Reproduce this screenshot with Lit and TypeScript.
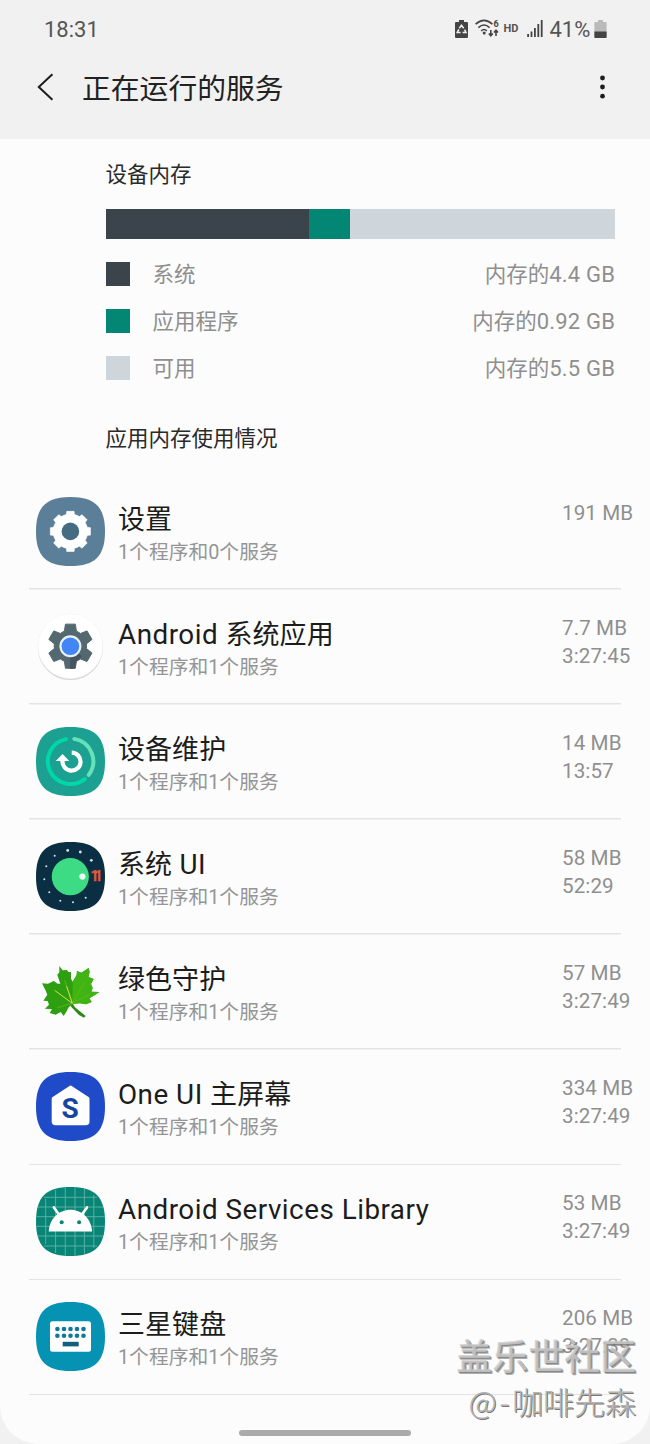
import { LitElement, html, css, svg } from "lit";
import { customElement, property } from "lit/decorators.js";

const SQUIRCLE = "M34.5 0C59 0 69 10 69 34.5S59 69 34.5 69 0 59 0 34.5 10 0 34.5 0Z";

// closed outline of a cog, first tooth pointing up
function gearPath(cx: number, cy: number, teeth: number, outer: number, inner: number, top: number, base: number) {
    const step = (Math.PI * 2) / teeth;
    const point = (r: number, a: number) => `${(cx + r * Math.sin(a)).toFixed(2)} ${(cy - r * Math.cos(a)).toFixed(2)}`;
    let d = "";
    for (let i = 0; i < teeth; i++) {
        const a = i * step;
        d += `${i ? "L" : "M"}${point(inner, a - base)}L${point(outer, a - top)}L${point(outer, a + top)}L${point(inner, a + base)}`;
        d += `A${inner} ${inner} 0 0 1 ${point(inner, a + step - base)}`;
    }
    return d + "Z";
}

const stars = [
    [31.7, 8.4], [44.3, 10], [55.3, 18.3], [18.7, 13.7], [10.3, 24.3],
    [8.3, 37.3], [13.3, 50.3], [24.3, 58.7], [37, 60.3], [49.7, 55.7],
];

const icons: Record<string, unknown> = {
    settings: svg`
        <path d="${SQUIRCLE}" fill="#5b7f99"/>
        <path d="${gearPath(34.4, 34.4, 8, 20.4, 17.3, 0.18, 0.24)}" fill="#fff" stroke="#fff" stroke-width="0.6" stroke-linejoin="round"/>
        <circle cx="34.4" cy="34.4" r="8.8" fill="#456b83"/>`,
    android: svg`
        <circle cx="34.4" cy="35.6" r="32.5" fill="#d2d2d2"/>
        <circle cx="34.4" cy="34.5" r="32.7" fill="#e9e9e9"/>
        <circle cx="34.4" cy="34.2" r="32.3" fill="#fff"/>
        <path d="${gearPath(34.4, 34.2, 6, 22.6, 16.2, 0.22, 0.38)}" fill="#54686f" stroke="#54686f" stroke-linejoin="round"/>
        <path d="M34.4 34.2 46 44.5 40.5 49 38.8 56.5 34 57Z" fill="#45545f"/>
        <circle cx="34.4" cy="34.2" r="11" fill="#e8f0fb"/>
        <circle cx="34.4" cy="34.2" r="8.8" fill="#4285f4"/>`,
    care: svg`
        <path d="${SQUIRCLE}" fill="#1ba092"/>
        <g fill="none" stroke-width="4" stroke-linecap="round">
            <path d="M30 12.1A22.7 22.7 0 1 0 48.7 52.1" stroke="#00d7a7"/>
            <path d="M38.3 11.9A22.7 22.7 0 0 1 52.7 47.9" stroke="#66e2b8"/>
        </g>
        <path d="M35.7 25.6A9 9 0 1 1 26.6 33.5" fill="none" stroke="#fff" stroke-width="4.2"/>
        <path d="M19.7 34 26.6 27 33.3 34Z" fill="#fff"/>`,
    ui: svg`
        <path d="${SQUIRCLE}" fill="#0a2e42"/>
        ${stars.map(([x, y], i) => svg`<circle cx="${x}" cy="${y}" r="${i < 3 ? 1.4 : 1}" fill="#d5e6ea"/>`)}
        <circle cx="34.3" cy="34.7" r="18.6" fill="#3ddc84"/>
        <circle cx="46.4" cy="34.6" r="3.1" fill="#e9fff2"/>
        <text x="54.6" y="39.4" font-family="Roboto" font-size="14" font-weight="700" textLength="12" fill="#dd5b3c" stroke="#dd5b3c" stroke-width="0.4">11</text>`,
    leaf: svg`
        <g transform="translate(-16 -17.3) scale(0.3333)">
            <path d="M157 190 165 203 197 229 192 234 177 226 152 200Z" fill="#2c8a14"/>
            <path d="M118 79 128 92 141 91 145 97 153 97 153 117 158 126 170 106 171 94 184 99 206 85 209 98 205 112 221 118 213 133 218 145 214 156 238 157 226 165 208 176 215 187 198 194 180 191 158 193 146 203 139 216 131 229 122 217 107 225 89 220 96 209 75 207 87 195 83 184 70 183 82 165 76 151 66 131 84 132 101 124 113 132 121 132 116 118 112 105 118 98Z" fill="#2e9f10"/>
            <path d="M157 190 158 126 170 106 171 94 184 99 206 85 209 98 205 112 221 118 213 133 218 145 214 156 238 157 226 165 208 176 215 187 198 194 180 191Z" fill="#3fb412"/>
            <path d="M157 190 134 122M157 190 194 128M157 190 112 204M157 190 210 164" fill="none" stroke="#62bb1c" stroke-width="2.5"/>
            <path d="M157 191 104 152M157 191 140 140" fill="none" stroke="#d7dd45" stroke-width="3"/>
        </g>`,
    home: svg`
        <path d="${SQUIRCLE}" fill="#1f4bc8"/>
        <path d="M34.6 14.8 52.2 26.4V49.5Q52.2 52 49.7 52H19.5Q17 52 17 49.5V26.4Z" fill="#fff" stroke="#fff" stroke-width="2.6" stroke-linejoin="round"/>
        <text x="34.2" y="46" text-anchor="middle" font-family="Roboto" font-size="28" font-weight="700" fill="#16459f">S</text>`,
    library: svg`
        <path d="${SQUIRCLE}" fill="#088576"/>
        <path d="M9.7 12V57M19.6 3V66M29.3 0V69M39 0V69M48.4 2V67M57.8 8V61M8 10.3H61M2 20H67M0 29.7H69M0 39.3H69M2 49H67M8 59H61" stroke="#62b3a7" stroke-width="0.9"/>
        <path d="M17.9 20.4 23.5 28.2M51 20.4 45.4 28.2" stroke="#fff" stroke-width="2.6" stroke-linecap="round"/>
        <path d="M12.7 44.4C13.6 32 22.5 22.8 34.4 22.8S55.2 32 56.1 44.4Z" fill="#fff"/>
        <circle cx="25.7" cy="35.3" r="2" fill="#088576"/>
        <circle cx="43.1" cy="35.3" r="2" fill="#088576"/>`,
    keyboard: svg`
        <path d="${SQUIRCLE}" fill="#0592b3"/>
        <rect x="14" y="19.2" width="41" height="30.6" rx="2.5" fill="#fff"/>
        ${[27, 33.8].map((y) => [21.4, 28, 34.5, 41, 47.5].map((x) => svg`<circle cx="${x}" cy="${y}" r="2.3" fill="#12789a"/>`))}
        <rect x="26.7" y="39.8" width="16" height="4.6" fill="#125f80"/>`,
};

@customElement("memory-legend")
export class MemoryLegend extends LitElement {

    @property() label = "";
    @property() value = "";
    @property() color = "";

    static styles = css`
    :host {
        display: flex;
        align-items: center;
        height: 47px;
        font-size: 21.5px;
        color: #8f8f8f;
    }

    .swatch {
        width: 24px;
        height: 24px;
        margin-right: 23px;
    }

    .label {
        flex: 1;
    }

    .label,
    .value {
        padding-bottom: 3px;
        white-space: nowrap;
    }

    .amount {
        font-size: 22px;
        letter-spacing: 0.2px;
        margin-right: -0.2px;
    }
    `;

    render() {
        return html`
        <div class="swatch" style="background:${this.color}"></div>
        <span class="label">${this.label}</span>
        <span class="value">内存的<span class="amount">${this.value}</span></span>
        `;
    }

}

@customElement("service-row")
export class ServiceRow extends LitElement {

    @property() icon = "";
    @property() name = "";
    @property() detail = "";
    @property() memory = "";
    @property() time = "";

    static styles = css`
    :host {
        display: flex;
        box-sizing: border-box;
        height: 115.1px;
        margin: 0 0 0 29px;
        padding: 22px 0 0 7px;
        background: linear-gradient(#e4e4e4, #e4e4e4) 0 100% / 592px 1.5px no-repeat;
    }

    .icon {
        display: block;
        width: 69px;
        height: 69px;
        margin-right: 13px;
    }

    .text {
        flex: 1;
        padding-top: 1px;
    }

    .name {
        height: 44px;
        line-height: 44px;
        font-size: 27px;
        color: #1c1c1c;
        letter-spacing: 0.05px;
    }

    .latin {
        font-size: 27.8px;
        letter-spacing: 0.5px;
    }

    .detail {
        height: 22px;
        line-height: 22px;
        font-size: 19.8px;
        color: #959595;
    }

    .usage {
        width: 88px;
        padding-top: 2px;
        font-size: 20.6px;
        line-height: 28px;
        letter-spacing: 0.1px;
        white-space: nowrap;
        color: #8f8f8f;
    }
    `;

    renderName() {
        return this.name.split(/([A-Za-z ]+)/).filter(Boolean)
            .map((part) => /[A-Za-z]/.test(part) ? html`<span class="latin">${part}</span>` : part);
    }

    render() {
        return html`
        <svg class="icon" viewBox="0 0 69 69">${icons[this.icon]}</svg>
        <div class="text">
            <div class="name">${this.renderName()}</div>
            <div class="detail">${this.detail}</div>
        </div>
        <div class="usage">
            <div>${this.memory}</div>
            <div>${this.time}</div>
        </div>
        `;
    }

}

@customElement("app-root")
export class AppRoot extends LitElement {

    static properties = {
        legend: { type: Array },
        services: { type: Array },
    };

    declare legend: { label: string; value: string; color: string; width: number }[];
    declare services: { icon: string; name: string; detail: string; memory: string; time: string }[];

    static styles = css`
    :host {
        display: block;
        position: relative;
        width: 650px;
        height: 1444px;
        overflow: hidden;
        background: #f1f1f1;
        font-family: Roboto, "Noto Sans CJK SC", sans-serif;
        font-weight: 400;
    }

    .status {
        display: flex;
        align-items: center;
        height: 57px;
        padding: 0 43px 0 44px;
        box-sizing: border-box;
        color: #555;
        font-size: 22px;
    }

    .clock {
        flex: 1;
        padding-top: 1px;
    }

    .status svg {
        display: block;
    }

    .recycle {
        margin-right: 7px;
    }

    .wifi {
        margin-right: 4px;
    }

    .hd {
        width: 23px;
        font-size: 11px;
        font-weight: 700;
    }

    .signal {
        margin-right: 7px;
    }

    .percent {
        width: 44.5px;
        padding-top: 1px;
    }

    .toolbar {
        display: flex;
        align-items: center;
        height: 82px;
        padding: 0 43px 23px 36px;
        box-sizing: border-box;
    }

    .title {
        flex: 1;
        margin: 0 0 0 27px;
        font-size: 28.8px;
        font-weight: 400;
        color: #222;
    }

    .content {
        display: flex;
        flex-direction: column;
        height: 1305px;
        background: #fcfcfc;
        border-radius: 0 0 38px 38px;
    }

    .memory {
        padding: 18px 35px 0 105.6px;
    }

    .heading {
        margin: 0;
        height: 36px;
        line-height: 36px;
        font-size: 21.5px;
        font-weight: 400;
        color: #2a2a2a;
    }

    .bar {
        display: flex;
        height: 29.5px;
        margin: 16px 0 12px;
    }

    .usage-heading {
        margin-top: 29px;
    }

    .list {
        padding-top: 18px;
    }

    .handle {
        width: 172px;
        height: 6px;
        margin: 35px auto 0;
        border-radius: 3px;
        background: #ababab;
    }

    .watermark {
        position: absolute;
        right: 14px;
        top: 1330px;
        text-align: right;
        white-space: nowrap;
        font-family: "Noto Sans CJK SC", sans-serif;
    }

    .community {
        height: 48px;
        line-height: 48px;
        font-size: 36px;
        font-weight: 500;
        color: rgba(205, 205, 205, 0.8);
        text-shadow: 1px 1px 0 rgba(120, 120, 120, 0.7), 2px 2px 0 rgba(120, 120, 120, 0.6);
    }

    .author {
        height: 46px;
        line-height: 46px;
        font-size: 31px;
        font-weight: 300;
        color: #b4b4b4;
        text-shadow: 1px 1px 0 #777;
    }

    .at {
        letter-spacing: 2.5px;
    }
    `;

    constructor() {
        super();
        this.legend = [
            { label: "系统", value: "4.4 GB", color: "#3b444b", width: 203.8 },
            { label: "应用程序", value: "0.92 GB", color: "#048675", width: 41 },
            { label: "可用", value: "5.5 GB", color: "#ced6dc", width: 264.6 },
        ];
        this.services = [
            { icon: "settings", name: "设置", detail: "1个程序和0个服务", memory: "191 MB", time: "" },
            { icon: "android", name: "Android 系统应用", detail: "1个程序和1个服务", memory: "7.7 MB", time: "3:27:45" },
            { icon: "care", name: "设备维护", detail: "1个程序和1个服务", memory: "14 MB", time: "13:57" },
            { icon: "ui", name: "系统 UI", detail: "1个程序和1个服务", memory: "58 MB", time: "52:29" },
            { icon: "leaf", name: "绿色守护", detail: "1个程序和1个服务", memory: "57 MB", time: "3:27:49" },
            { icon: "home", name: "One UI 主屏幕", detail: "1个程序和1个服务", memory: "334 MB", time: "3:27:49" },
            { icon: "library", name: "Android Services Library", detail: "1个程序和1个服务", memory: "53 MB", time: "3:27:49" },
            { icon: "keyboard", name: "三星键盘", detail: "1个程序和1个服务", memory: "206 MB", time: "3:27:39" },
        ];
    }

    renderStatus() {
        return html`
        <div class="status">
            <span class="clock">18:31</span>
            <svg class="recycle" width="13" height="18" viewBox="0 0 13 18">
                <path d="M4 0H9V2H12Q13 2 13 3V17Q13 18 12 18H1Q0 18 0 17V3Q0 2 1 2H4Z" fill="#444"/>
                <path d="M4.3 8.2 6.5 5.2 8.7 8.2M9.6 9.6 11 12.6H7.6M5.6 12.6H2.2L3.8 9.4" fill="none" stroke="#f1f1f1" stroke-width="1.5"/>
            </svg>
            <svg class="wifi" width="25" height="19" viewBox="0 0 25 19">
                <g fill="none" stroke="#444" stroke-width="1.6">
                    <path d="M0.6 5.2Q9 -2.6 17.4 5.2M3.4 8.6Q9 3.4 14.6 8.6M6.2 11.8Q9 9.2 11.8 11.8"/>
                    <path d="M15.8 11V16.5M13.8 14.4 15.8 16.8 17.8 14.4M21 17V11.5M19 13.6 21 11.2 23 13.6" stroke-width="1.6"/>
                </g>
                <circle cx="9.2" cy="14" r="1.5" fill="#444"/>
                <text x="18.6" y="7.6" font-size="9" font-weight="700" fill="#444">6</text>
            </svg>
            <span class="hd">HD</span>
            <svg class="signal" width="16" height="17" viewBox="0 0 16 17">
                <path d="M1.1 17V14M4.5 17V11.5M7.9 17V8M11.3 17V4M14.7 17V0" stroke="#444" stroke-width="1.8"/>
            </svg>
            <span class="percent">41%</span>
            <svg width="13" height="18" viewBox="0 0 13 18">
                <path d="M4 0H9V2H12Q12.6 2 12.6 3V18H0.4V3Q0.4 2 1 2H4Z" fill="#bababa"/>
                <path d="M0.4 11.4H12.6V17Q12.6 18 11.6 18H1.4Q0.4 18 0.4 17Z" fill="#444"/>
            </svg>
        </div>
        `;
    }

    render() {
        return html`
        ${this.renderStatus()}
        <div class="toolbar">
            <svg width="19" height="28" viewBox="0 0 19 28">
                <path d="M16.4 1.2 2.8 14 16.4 26.8" fill="none" stroke="#1c1c1c" stroke-width="2"/>
            </svg>
            <h1 class="title">正在运行的服务</h1>
            <svg width="9" height="24" viewBox="0 0 9 24">
                <circle cx="4.5" cy="3" r="2.4" fill="#1c1c1c"/>
                <circle cx="4.5" cy="12" r="2.4" fill="#1c1c1c"/>
                <circle cx="4.5" cy="21.2" r="2.4" fill="#1c1c1c"/>
            </svg>
        </div>
        <div class="content">
            <div class="memory">
                <h2 class="heading">设备内存</h2>
                <div class="bar">
                    ${this.legend.map((item) => html`<div style="width:${item.width}px;background:${item.color}"></div>`)}
                </div>
                ${this.legend.map((item) => html`
                <memory-legend .label="${item.label}" .value="${item.value}" .color="${item.color}"></memory-legend>`)}
                <h2 class="heading usage-heading">应用内存使用情况</h2>
            </div>
            <div class="list">
                ${this.services.map((item) => html`
                <service-row .icon="${item.icon}" .name="${item.name}" .detail="${item.detail}" .memory="${item.memory}" .time="${item.time}"></service-row>`)}
            </div>
            <div class="handle"></div>
        </div>
        <div class="watermark">
            <div class="community">盖乐世社区</div>
            <div class="author"><span class="at">@-</span>咖啡先森</div>
        </div>
        `;
    }

}
